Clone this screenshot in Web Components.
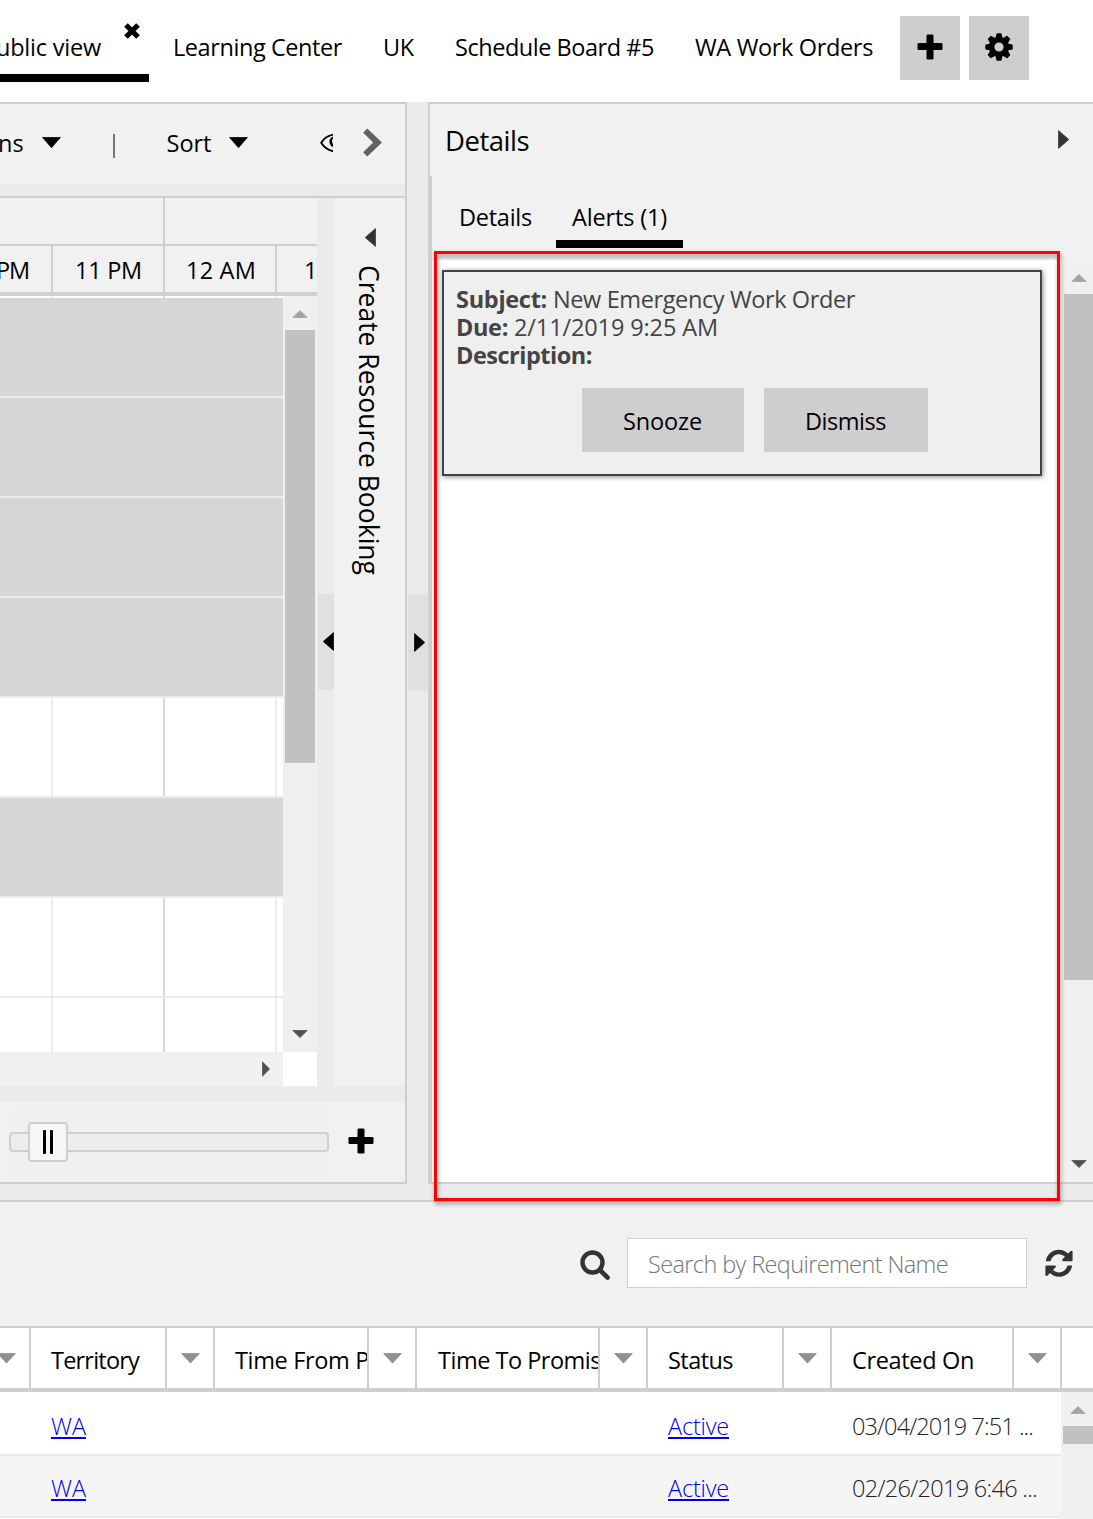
<!DOCTYPE html>
<html lang="en">
<head>
<meta charset="utf-8">
<title>Schedule Board</title>
<style>
html,body{margin:0;padding:0}
body{width:1093px;height:1519px;overflow:hidden;background:#fff;color:#000;font-family:"Open Sans","Noto Sans",sans-serif;font-size:23.5px}
</style>
</head>
<body>
<schedule-app></schedule-app>
<script>
const define = (name, html, setup) => {
  const tpl = document.createElement('template');
  tpl.innerHTML = '<style>*{box-sizing:border-box}:host{box-sizing:border-box}</style>' + html;
  customElements.define(name, class extends HTMLElement {
    constructor() {
      super();
      this.attachShadow({ mode: 'open' }).append(tpl.content.cloneNode(true));
    }
    connectedCallback() { if (setup) setup(this, this.shadowRoot); }
  });
};

/* Single-line label; "w" is the advance width, reached by tracking. */
define('ui-text', `<style>
:host{display:inline-block;white-space:pre;flex:none;font-weight:400}
:host([bold]){font-weight:700}
:host([light]){font-weight:300}
:host([vertical]){writing-mode:vertical-rl}
</style><slot></slot>`, (el) => {
  if (el.hasAttribute('size')) el.style.fontSize = el.getAttribute('size') + 'px';
  if (!el.hasAttribute('w')) return;
  const box = el.getBoundingClientRect();
  const len = el.hasAttribute('vertical') ? box.height : box.width;
  el.style.letterSpacing = ((+el.getAttribute('w') - len) / el.textContent.length) + 'px';
});

/* Solid triangle: dir, width and height. */
define('ui-arrow', `<style>:host{display:block;flex:none}svg{display:block}</style>
<svg preserveAspectRatio="none" viewBox="0 0 10 10"><path fill="currentColor" stroke="currentColor" stroke-linejoin="round"/></svg>`, (el, root) => {
  const d = { down: 'M.4 .4H9.6L5 9.5z', up: 'M.4 9.6H9.6L5 .5z', left: 'M9.6 .4V9.6L.5 5z', right: 'M.4 .4V9.6L9.5 5z' };
  const svg = root.querySelector('svg');
  svg.setAttribute('width', el.getAttribute('w'));
  svg.setAttribute('height', el.getAttribute('h'));
  const p = root.querySelector('path');
  p.setAttribute('d', d[el.getAttribute('dir')]);
  p.setAttribute('stroke-width', '.6');
});

define('icon-plus', `<style>:host{display:block;flex:none;width:26px;height:26px}svg{display:block}</style>
<svg width="26" height="26" viewBox="0 0 26 26"><rect x="9.5" y=".5" width="7" height="25" rx="1.3"/><rect x=".5" y="9" width="25" height="7" rx="1.3"/></svg>`);

define('icon-gear', `<style>:host{display:block;flex:none}svg{display:block}</style>
<svg width="28" height="28" viewBox="-14 -14 28 28"><g id="t"></g><circle r="7.4" fill="none" stroke="#000" stroke-width="5.6"/></svg>`, (el, root) => {
  const ns = 'http://www.w3.org/2000/svg';
  for (let i = 0; i < 8; i++) {
    const p = document.createElementNS(ns, 'path');
    p.setAttribute('d', 'M-3.6 -8.5L-2.5 -13.2Q-2.3 -13.7 -1.8 -13.7H1.8Q2.3 -13.7 2.5 -13.2L3.6 -8.5z');
    p.setAttribute('transform', 'rotate(' + i * 45 + ')');
    root.querySelector('#t').append(p);
  }
});

define('board-tabs', `<style>
:host{display:flex;height:102px;background:#fff;line-height:30px;overflow:hidden}
.active{width:149px;height:82px;border-bottom:8px solid #000;display:flex;flex:none;padding-top:32px}
.active ui-text{margin-left:-4px}
.active svg{margin:-10px 0 0 22px}
nav{display:flex;padding:32px 0 0 24px;width:751px}
nav ui-text+ui-text{margin-left:41px}
.btns{display:flex;gap:9px;padding-top:16px}
.b{width:60px;height:64px;background:#d0cdce;display:flex;align-items:center;justify-content:center;padding-bottom:2px}
.b icon-plus{margin-left:-1px}
</style>
<div class="active"><ui-text w="105">ublic view</ui-text><svg width="18" height="18" viewBox="0 0 18 18"><path d="M3 3L15 15M15 3L3 15" stroke="#000" stroke-width="5.2"/></svg></div>
<nav><ui-text w="169">Learning Center</ui-text><ui-text w="31">UK</ui-text><ui-text w="199">Schedule Board #5</ui-text><ui-text w="178">WA Work Orders</ui-text></nav>
<div class="btns"><div class="b"><icon-plus></icon-plus></div><div class="b"><icon-gear></icon-gear></div></div>`);

define('board-toolbar', `<style>
:host{display:flex;height:80px;background:#f1f1f1;line-height:30px;padding-top:24px;overflow:hidden}
ui-arrow{margin-top:9px}
.sep{width:1.5px;height:24px;background:#777;margin:6px 0 0 52px}
.eye{margin:5px 0 0 72px}.next{margin:0 0 0 29px}
</style>
<ui-text w="26" style="margin-left:-2px">ns</ui-text><ui-arrow dir="down" w="19" h="11" style="margin-left:18px"></ui-arrow>
<div class="sep"></div><ui-text w="45" style="margin-left:52px">Sort</ui-text><ui-arrow dir="down" w="19" h="11" style="margin-left:17px"></ui-arrow>
<svg class="eye" width="13" height="20" viewBox="0 0 13 20"><path d="M14 1.4Q5 3 1.2 9.8Q5 16.5 14 18.4" fill="none" stroke="#000" stroke-width="1.9"/><path d="M14 3Q8.5 5.5 9.6 10Q10.5 13.5 14 14.8V12.5Q11.5 10 12.2 7Q12.7 5.5 14 5z"/></svg>
<svg class="next" width="21" height="30" viewBox="0 0 21 30"><path d="M3.2 2.7L15.6 14.5L3.2 26.3" fill="none" stroke="#626262" stroke-width="6"/></svg>`);

/* Vertical scrollbar: the thumb comes from the --len property. */
define('scroll-bar', `<style>
:host{display:flex;flex-direction:column;align-items:center;background:#f0f0f0;flex:none}
.up{color:#a3a3a3}.down{color:#505050;margin-top:auto;margin-bottom:14px}
.thumb{background:#c1c1c1;flex:none;width:30px;height:var(--len);margin-top:12px}
:host([noend]) .down{display:none}
</style><ui-arrow class="up" dir="up" w="16" h="8" style="margin-top:14px"></ui-arrow><div class="thumb"></div><ui-arrow class="down" dir="down" w="16" h="8"></ui-arrow>`);

define('schedule-grid', `<style>
:host{display:flex;flex-direction:column;width:317px;height:888px;overflow:hidden;flex:none;line-height:46px}
.days,.hours{display:flex;background:#f1f1f1;height:48px;flex:none;overflow:hidden}
.days{border-bottom:2px solid #cfcfcf}.days div{width:165px;border-right:2px solid #cfcfcf;flex:none}
.hours{height:50px;border-bottom:4px solid #cfcfcf}
.hours div{flex:none;width:112px;border-right:2px solid #cfcfcf;height:46px;line-height:49px}
.hours div:first-child{width:53px}
.body{display:flex;height:756px}
.rows{width:283px;display:flex;flex-direction:column;overflow:hidden;
background:linear-gradient(90deg,transparent 51px,#eee 51px 53px,transparent 53px 163px,#d9d9d9 163px 165px,transparent 165px 275px,#eee 275px 277px,transparent 277px) #fff}
.rows div{height:100px;border-bottom:2px solid #ebebeb;flex:none}
.rows .off{background:#d6d6d6}
.rows div:first-child{height:100px;margin-top:2px}
.h{display:flex;height:34px;background:#f0f0f0}.h ui-arrow{color:#505050;margin:9px 13px 0 262px}.corner{width:34px;height:34px;background:#fff}
scroll-bar{width:34px;height:756px;--len:433px}
</style>
<div class="days"><div></div></div>
<div class="hours"><div><ui-text w="33" style="margin-left:-4px">PM</ui-text></div><div><ui-text w="67" style="margin-left:22px">11 PM</ui-text></div><div><ui-text w="70" style="margin-left:21px">12 AM</ui-text></div><div style="border:0;width:40px"><ui-text style="margin-left:27px">1</ui-text></div></div>
<div class="body"><div class="rows"><div class="off"></div><div class="off"></div><div class="off"></div><div class="off"></div><div></div><div class="off"></div><div></div><div></div></div><scroll-bar></scroll-bar></div>
<div class="h"><ui-arrow dir="right" w="8" h="16"></ui-arrow><div class="corner"></div></div>`);

define('split-bar', `<style>
:host{display:flex;flex-direction:column;background:#ebebeb;flex:none}
.grip{background:#e0e0e0;height:96px;margin:var(--top) 0 0 1px;padding:38px 0 0 var(--in,5px)}
</style><div class="grip"><slot></slot></div>`);

define('zoom-slider', `<style>
:host{display:flex;height:80px;background:#f1f1f1;padding:0 0 0 9px}
.z{width:320px;height:72px;margin-top:5px;background:#f0f0f0;padding-top:25px}
.track{height:20px;border:2px solid #cfcfcf;border-radius:4px;background:#ededed;padding-left:17px}
.handle{width:40px;height:40px;margin-top:-12px;border:2px solid #cfcfcf;border-radius:4px;background:#f6f6f6;display:flex;gap:4px;justify-content:center;align-items:center}
.handle i{width:3px;height:24px;background:#000;border-radius:1px}
icon-plus{margin:26px 0 0 19px}
</style><div class="z"><div class="track"><div class="handle"><i></i><i></i></div></div></div><icon-plus></icon-plus>`);

define('board-panel', `<style>
:host{display:block;width:407px;height:1082px;border:2px solid #cfcfcf;border-left:0;background:#ebebeb;flex:none}
.mid{display:flex;margin-top:12px;border-top:2px solid #cfcfcf;height:890px}
.create{width:71px;background:#f1f1f1;display:flex;flex-direction:column;align-items:flex-start;line-height:36px}
.create ui-arrow{color:#333;margin:30px 0 0 31px}
.create ui-text{margin:18px 0 0 17px}
zoom-slider{margin-top:16px}
</style>
<board-toolbar></board-toolbar>
<div class="mid"><schedule-grid></schedule-grid>
<split-bar style="width:17px;--top:396px"><ui-arrow dir="left" w="11" h="19"></ui-arrow></split-bar>
<div class="create"><ui-arrow dir="left" w="11" h="19"></ui-arrow><ui-text vertical size="26.5" w="310">Create Resource Booking</ui-text></div></div>
<zoom-slider></zoom-slider>`);

define('ui-button', `<style>:host{display:flex;height:64px;background:#d0cdce;align-items:center;padding:1px 0 0 41px;flex:none}</style><slot></slot>`);

define('alert-card', `<style>
:host{display:block;width:600px;height:206px;border:2px solid #444;background:#efefef;color:#444;box-shadow:1px 1px 5px rgba(0,0,0,.45);padding:13px 0 0 12px;line-height:28px}
.l{display:flex;height:28px}.l ui-text+ui-text{margin-left:6px}
.b{display:flex;gap:20px;margin:19px 0 0 126px;color:#000}
</style>
<div class="l"><ui-text bold w="91">Subject:</ui-text><ui-text w="302">New Emergency Work Order</ui-text></div>
<div class="l"><ui-text bold w="52">Due:</ui-text><ui-text w="204">2/11/2019 9:25 AM</ui-text></div>
<div class="l"><ui-text bold w="136">Description:</ui-text></div>
<div class="b"><ui-button style="width:162px"><ui-text w="79">Snooze</ui-text></ui-button><ui-button style="width:164px"><ui-text w="81">Dismiss</ui-text></ui-button></div>`);

define('details-panel', `<style>
:host{display:flex;flex-direction:column;width:665px;height:1082px;border:solid #cfcfcf;border-width:2px 0 2px 2px;background:#f1f1f1;flex:none}
.t{display:flex;height:72px;line-height:40px;padding:17px 0 0 15px}
.t ui-arrow{color:#333;margin:9px 0 0 529px}
.c{border-left:2px solid #cfcfcf;height:1006px}
.tabs{display:flex;height:84px;padding-top:24px;line-height:34px}
.on{width:127px;height:48px;border-bottom:8px solid #000;padding-left:16px;margin-left:24px}
.s{display:flex;height:922px;overflow:hidden}
.list{width:630px;flex:none;background:#fff;padding:10px 0 0 10px}
scroll-bar{width:34px;height:922px;--len:686px}
</style>
<div class="t"><ui-text size="27.5" w="84">Details</ui-text><ui-arrow dir="right" w="11" h="19"></ui-arrow></div>
<div class="c"><div class="tabs"><ui-text w="73" style="margin-left:27px">Details</ui-text><div class="on"><ui-text w="95">Alerts (1)</ui-text></div></div>
<div class="s"><div class="list"><alert-card></alert-card></div><scroll-bar></scroll-bar></div></div>`);

define('grid-column', `<style>
:host{display:flex;flex:none;height:60px;line-height:65px}
.name{flex:1;min-width:0;overflow:hidden;border-right:2px solid #cfcfcf;padding-left:20px}
.m{width:48px;border-right:2px solid #cfcfcf;padding:25px 0 0 14px;flex:none;color:#919191}
</style><div class="name"><slot></slot></div><div class="m"><ui-arrow dir="down" w="19" h="10.5"></ui-arrow></div>`);

define('grid-row', `<style>
:host{display:flex;height:64px;border-bottom:2px solid #e9e9e9;line-height:68px;padding-left:51px;flex:none}
a{color:#00e;border-bottom:2px solid #00e;line-height:26px;height:26px;flex:none;margin-top:var(--mt,21px)}
.n{margin-left:123px;color:#222}
a+a{margin-left:582px}
</style><a><ui-text light w="35">WA</ui-text></a><a><ui-text light w="61">Active</ui-text></a><div class="n"><slot></slot></div>`);

define('requirement-panel', `<style>
:host{display:block;height:319px;border-top:2px solid #cfcfcf;background:#f1f1f1;overflow:hidden}
.s{display:flex;height:124px;padding:36px 0 0 579px}
.in{width:400px;height:50px;border:1px solid #cfcfcf;background:#fff;margin-left:16px;padding-left:20px;line-height:51px;color:#767676}
.h{display:flex;border:solid #cfcfcf;border-width:2px 0 4px;background:#fff;height:66px}
.f{width:31px;border-right:2px solid #cfcfcf;color:#919191;padding-top:25px}
.b{display:flex}.rows{width:1061px;height:130px;background:#fff;display:flex;flex-direction:column;flex:none}
scroll-bar{width:34px;height:127px;--len:18px;overflow:hidden}
</style>
<div class="s"><svg style="margin-top:11px" width="32" height="32" viewBox="0 0 32 32"><circle cx="13.5" cy="13.5" r="10" fill="none" stroke="#333" stroke-width="4.4"/><path d="M21 21L28.6 28.6" stroke="#333" stroke-width="4.6" stroke-linecap="round"/></svg>
<div class="in"><ui-text light w="300">Search by Requirement Name</ui-text></div>
<svg style="margin:11px 0 0 18px" width="28" height="29" viewBox="0 0 28 29"><g fill="#333"><path d="M.8 12.2C2 5 7.5 .8 14 .8C17.6 .8 20.7 2.2 23 4.5L25.4 2.2Q27.6 .8 27.6 3V11.2Q27.6 12.2 26.6 12.2H18.3Q16.5 12 17.4 10.3L20 7.7C18.3 6.1 16.3 5.2 14 5.2C10 5.2 7 7.7 5.4 12.2z"/><path transform="rotate(180 14 14.3)" d="M.8 12.2C2 5 7.5 .8 14 .8C17.6 .8 20.7 2.2 23 4.5L25.4 2.2Q27.6 .8 27.6 3V11.2Q27.6 12.2 26.6 12.2H18.3Q16.5 12 17.4 10.3L20 7.7C18.3 6.1 16.3 5.2 14 5.2C10 5.2 7 7.7 5.4 12.2z"/></g></svg></div>
<div class="h"><div class="f"><ui-arrow dir="down" w="19" h="10.5" style="margin-left:-3px"></ui-arrow></div>
<grid-column style="width:184px"><ui-text w="88">Territory</ui-text></grid-column>
<grid-column style="width:202px"><ui-text w="134">Time From P</ui-text></grid-column>
<grid-column style="width:231px"><ui-text w="163" style="margin-left:1px">Time To Promis</ui-text></grid-column>
<grid-column style="width:184px"><ui-text w="65">Status</ui-text></grid-column>
<grid-column style="width:230px"><ui-text w="122">Created On</ui-text></grid-column></div>
<div class="b"><div class="rows"><grid-row><ui-text light w="181">03/04/2019 7:51 ...</ui-text></grid-row><grid-row style="height:62px;background:#f5f5f5;--mt:19px;line-height:64px"><ui-text light w="185">02/26/2019 6:46 ...</ui-text></grid-row></div><scroll-bar noend></scroll-bar></div>`);

define('schedule-app', `<style>
:host{display:block;position:relative;width:1093px;height:1519px;overflow:hidden;background:#ebebeb}
.main{display:flex;height:1082px}
requirement-panel{margin-top:16px}
.mark{position:absolute;left:434px;top:251px;width:626px;height:950px;border:3px solid #f00;filter:drop-shadow(1px 3px 2px rgba(0,0,0,.4))}
</style>
<board-tabs></board-tabs>
<div class="main"><board-panel></board-panel><split-bar style="width:21px;--top:493px;--in:6px"><ui-arrow dir="right" w="11" h="19"></ui-arrow></split-bar><details-panel></details-panel></div>
<requirement-panel></requirement-panel>
<div class="mark"></div>`);
</script>
</body>
</html>
